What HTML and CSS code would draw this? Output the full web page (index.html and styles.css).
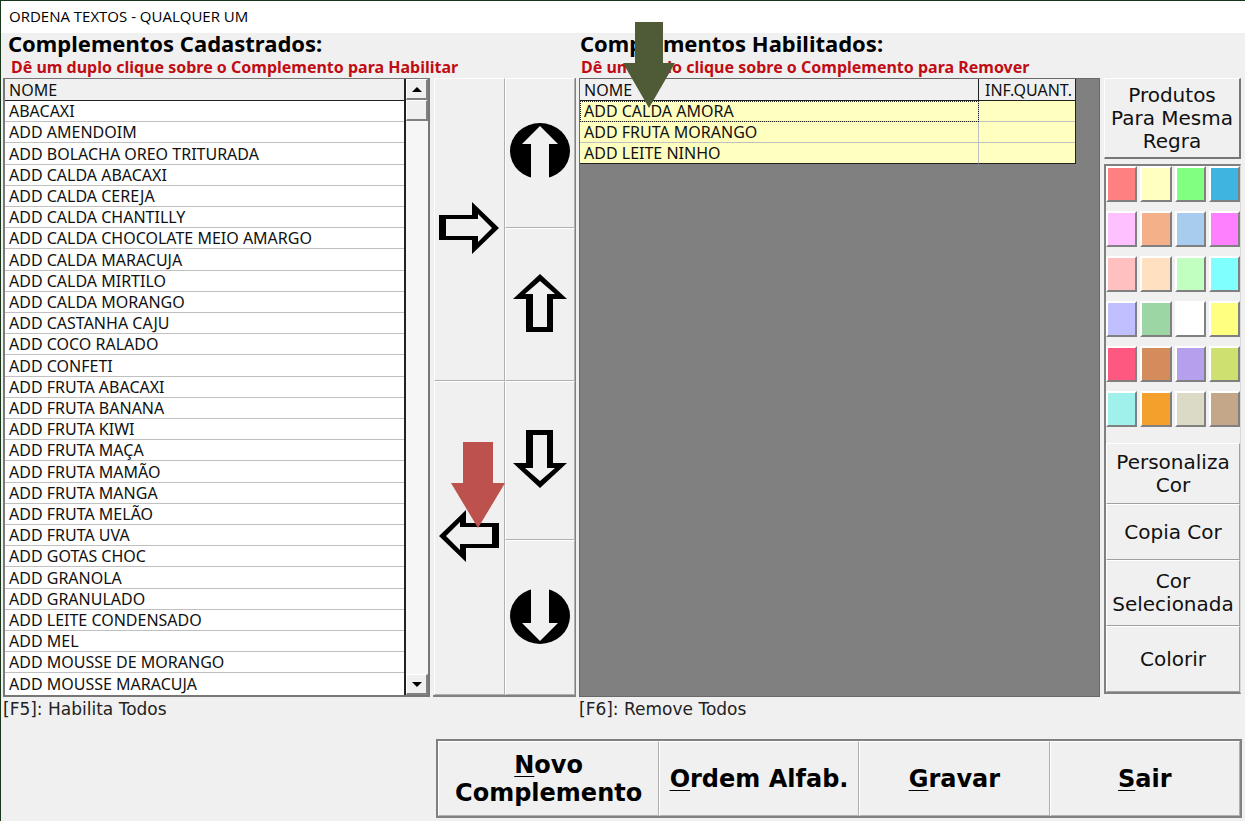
FILE: index.html
```html
<!DOCTYPE html>
<html lang="pt-BR">
<head>
<meta charset="utf-8">
<title>ORDENA TEXTOS - QUALQUER UM</title>
<link rel="stylesheet" href="styles.css">
</head>
<body>
<div class="window">
  <header class="titlebar">ORDENA TEXTOS - QUALQUER UM</header>
  <main class="workspace">
    <section class="column">
      <div class="heading">
        <h2>Complementos Cadastrados:</h2>
        <p>Dê um duplo clique sobre o Complemento para Habilitar</p>
      </div>
      <div class="list">
        <table class="grid grid-full">
          <thead><tr><th>NOME</th></tr></thead>
          <tbody>
            <tr><td>ABACAXI</td></tr>
            <tr><td>ADD AMENDOIM</td></tr>
            <tr><td>ADD BOLACHA OREO TRITURADA</td></tr>
            <tr><td>ADD CALDA ABACAXI</td></tr>
            <tr><td>ADD CALDA CEREJA</td></tr>
            <tr><td>ADD CALDA CHANTILLY</td></tr>
            <tr><td>ADD CALDA CHOCOLATE MEIO AMARGO</td></tr>
            <tr><td>ADD CALDA MARACUJA</td></tr>
            <tr><td>ADD CALDA MIRTILO</td></tr>
            <tr><td>ADD CALDA MORANGO</td></tr>
            <tr><td>ADD CASTANHA CAJU</td></tr>
            <tr><td>ADD COCO RALADO</td></tr>
            <tr><td>ADD CONFETI</td></tr>
            <tr><td>ADD FRUTA ABACAXI</td></tr>
            <tr><td>ADD FRUTA BANANA</td></tr>
            <tr><td>ADD FRUTA KIWI</td></tr>
            <tr><td>ADD FRUTA MAÇA</td></tr>
            <tr><td>ADD FRUTA MAMÃO</td></tr>
            <tr><td>ADD FRUTA MANGA</td></tr>
            <tr><td>ADD FRUTA MELÃO</td></tr>
            <tr><td>ADD FRUTA UVA</td></tr>
            <tr><td>ADD GOTAS CHOC</td></tr>
            <tr><td>ADD GRANOLA</td></tr>
            <tr><td>ADD GRANULADO</td></tr>
            <tr><td>ADD LEITE CONDENSADO</td></tr>
            <tr><td>ADD MEL</td></tr>
            <tr><td>ADD MOUSSE DE MORANGO</td></tr>
            <tr><td>ADD MOUSSE MARACUJA</td></tr>
          </tbody>
        </table>
        <div class="scrollbar">
          <button class="scroll-part" aria-label="Rolar para cima"><svg width="10" height="5" viewBox="0 0 10 5"><path d="M5 0l5 5H0z"/></svg></button>
          <div class="scroll-part"></div>
          <button class="scroll-part scroll-end" aria-label="Rolar para baixo"><svg width="10" height="5" viewBox="0 0 10 5"><path d="M0 0h10L5 5z"/></svg></button>
        </div>
      </div>
      <p class="hint">[F5]: Habilita Todos</p>
    </section>

    <section class="movers">
      <div class="mover-col mover-side">
        <button aria-label="Habilitar"><svg width="60" height="52" viewBox="0 0 60 52"><path fill-rule="evenodd" d="M0 13H33V0L60 26L33 52V38H0ZM7 17V34H39V40L53 26L39 12V17Z"/></svg></button>
        <button aria-label="Remover"><svg width="60" height="52" viewBox="0 0 60 52"><path fill-rule="evenodd" d="M60 13H27V0L0 26L27 52V38H60ZM53 17V34H21V40L7 26L21 12V17Z"/></svg></button>
      </div>
      <div class="mover-col mover-order">
        <button aria-label="Mover para o início"><svg width="60" height="60" viewBox="0 0 60 60"><ellipse cx="30" cy="30" rx="30" ry="28"/><path class="cut" d="M30 5L48 23H39V60H21V23H12Z"/></svg></button>
        <button aria-label="Mover para cima"><svg width="54" height="58" viewBox="0 0 54 58"><path fill-rule="evenodd" d="M27 0L54 25H40V58H13V25H0ZM27 7L12 20H20V53H34V20H42Z"/></svg></button>
        <button aria-label="Mover para baixo"><svg width="54" height="58" viewBox="0 0 54 58"><path fill-rule="evenodd" d="M27 58L54 33H40V0H13V33H0ZM27 51L12 38H20V5H34V38H42Z"/></svg></button>
        <button aria-label="Mover para o fim"><svg width="60" height="60" viewBox="0 0 60 60"><ellipse cx="30" cy="31" rx="30" ry="28"/><path class="cut" d="M30 56L48 38H39V0H21V38H12Z"/></svg></button>
      </div>
      <svg class="marker marker-red" width="54" height="86" viewBox="0 0 54 86"><path d="M12 0H42V41H54L27 86L0 41H12Z"/></svg>
    </section>

    <section class="column column-enabled">
      <div class="heading">
        <h2>Complementos Habilitados:</h2>
        <p>Dê um duplo clique sobre o Complemento para Remover</p>
      </div>
      <div class="list list-gray">
        <table class="grid grid-enabled">
          <thead><tr><th>NOME</th><th class="quant">INF.QUANT.</th></tr></thead>
          <tbody>
            <tr><td class="focused">ADD CALDA AMORA</td><td></td></tr>
            <tr><td>ADD FRUTA MORANGO</td><td></td></tr>
            <tr><td>ADD LEITE NINHO</td><td></td></tr>
          </tbody>
        </table>
      </div>
      <p class="hint">[F6]: Remove Todos</p>
      <svg class="marker marker-green" width="54" height="86" viewBox="0 0 54 86"><path d="M13 0H41V41H53L27 86L1 41H13Z"/></svg>
    </section>

    <aside class="tools">
      <button class="rule-button">Produtos Para Mesma Regra</button>
      <div class="tool-panel">
        <div class="swatches">
          <button class="swatch c1" aria-label="Cor 1"></button><button class="swatch c2" aria-label="Cor 2"></button><button class="swatch c3" aria-label="Cor 3"></button><button class="swatch c4" aria-label="Cor 4"></button>
          <button class="swatch c5" aria-label="Cor 5"></button><button class="swatch c6" aria-label="Cor 6"></button><button class="swatch c7" aria-label="Cor 7"></button><button class="swatch c8" aria-label="Cor 8"></button>
          <button class="swatch c9" aria-label="Cor 9"></button><button class="swatch c10" aria-label="Cor 10"></button><button class="swatch c11" aria-label="Cor 11"></button><button class="swatch c12" aria-label="Cor 12"></button>
          <button class="swatch c13" aria-label="Cor 13"></button><button class="swatch c14" aria-label="Cor 14"></button><button class="swatch c15" aria-label="Cor 15"></button><button class="swatch c16" aria-label="Cor 16"></button>
          <button class="swatch c17" aria-label="Cor 17"></button><button class="swatch c18" aria-label="Cor 18"></button><button class="swatch c19" aria-label="Cor 19"></button><button class="swatch c20" aria-label="Cor 20"></button>
          <button class="swatch c21" aria-label="Cor 21"></button><button class="swatch c22" aria-label="Cor 22"></button><button class="swatch c23" aria-label="Cor 23"></button><button class="swatch c24" aria-label="Cor 24"></button>
        </div>
        <div class="color-actions">
          <button>Personaliza Cor</button>
          <button>Copia Cor</button>
          <button>Cor Selecionada</button>
          <button>Colorir</button>
        </div>
      </div>
    </aside>
  </main>
  <footer class="actions">
    <button><span><u>N</u>ovo<br>Complemento</span></button>
    <button><span><u>O</u>rdem Alfab.</span></button>
    <button><span><u>G</u>ravar</span></button>
    <button><span><u>S</u>air</span></button>
  </footer>
</div>
</body>
</html>
```
FILE: styles.css
```css
* { box-sizing: border-box; }
body { margin: 0; background: #f0f0f0; color: #111; }
h2, p { margin: 0; }
button {
  margin: 0;
  padding: 0;
  border: 0;
  border-radius: 0;
  background: #f0f0f0;
  color: #111;
  font-family: "DejaVu Sans", Verdana, sans-serif;
}
.window {
  display: flex;
  flex-direction: column;
  min-height: 100vh;
  border-top: 1px solid #17361a;
  border-left: 1px solid #17361a;
}
.titlebar {
  height: 32px;
  padding-left: 8px;
  background: #fff;
  color: #000;
  font: 15px/30px "Open Sans", "Noto Sans", sans-serif;
}
.workspace {
  flex: 1;
  display: grid;
  grid-template-columns: minmax(0, 427fr) 143px minmax(0, 521fr) 138px;
  gap: 3px;
  padding: 0 4px 0 2px;
}
.column { position: relative; display: flex; flex-direction: column; }
.heading { height: 45px; white-space: nowrap; font-family: "Noto Sans", Tahoma, sans-serif; }
.heading h2 { padding-left: 5px; font-size: 22px; line-height: 20px; color: #000; }
.heading p { padding: 3px 0 0 8px; font-size: 16px; line-height: 22px; font-weight: bold; color: #c00d14; }
.column-enabled .heading h2 { padding-left: 1px; }
.column-enabled .heading p { padding-left: 2px; }
.hint { height: 24px; font: 17px/24px "DejaVu Sans", Verdana, sans-serif; color: #222; }

.list { flex: 1; display: flex; border: 2px solid #777; border-top-width: 1px; background: #fff; }
.list-gray { border: 1px solid #696969; background: #808080; padding-right: 23px; align-items: flex-start; }
.grid { border-collapse: separate; border-spacing: 0; table-layout: fixed; width: 100%; font: 16px/20px "Noto Sans", Tahoma, sans-serif; }
.grid-full { flex: 1; height: 100%; border-right: 2px solid #222; }
.grid th { padding: 1px 4px 0; text-align: left; font-weight: normal; background: #f0f0f0; border-bottom: 1px solid #222; }
.grid td { height: 21px; padding: 0 4px; border-bottom: 1px solid #c0c0c0; }
.grid tr:last-child td { border-bottom-color: #222; }
.grid-full tr:last-child td { border-bottom: 0; }
.grid-enabled { border-right: 1px solid #222; }
.grid-enabled td { background: #ffffc0; }
.grid-enabled th:first-child { border-right: 1px solid #222; }
.grid-enabled td:first-child { border-right: 1px solid #c0c0c0; }
.grid-enabled .quant { width: 96px; padding-left: 6px; }
.focused { outline: 1px dotted #222; outline-offset: -1px; }

.scrollbar { width: 22px; display: flex; flex-direction: column; background: #f6f6f6; }
.scroll-part { height: 21px; display: flex; align-items: center; justify-content: center; background: #f0f0f0; border: 1px solid #fff; border-right: 2px solid #808080; border-bottom: 2px solid #808080; }
.scroll-end { margin-top: auto; }

.movers { position: relative; display: grid; grid-template-columns: 1fr 1fr; margin: 45px 0 24px; padding-left: 1px; border-right: 1px solid #808080; border-bottom: 2px solid #808080; }
.mover-col { display: grid; }
.mover-side { grid-template-rows: 303fr 313fr; }
.mover-order { grid-template-rows: 150fr 153fr 158fr 155fr; }
.mover-col button { display: flex; align-items: center; justify-content: center; padding-bottom: 4px; border: 1px solid #fff; border-right-color: #b0b0b0; border-bottom-color: #b0b0b0; }
.cut { fill: #f0f0f0; }
.marker { position: absolute; pointer-events: none; }
.marker-red { left: 18px; top: 364px; fill: #bc514e; }
.marker-green { left: 43px; top: -11px; fill: #4f5a36; }

.tools { display: flex; flex-direction: column; gap: 5px; margin: 45px 0 27px; padding-left: 1px; }
.tools button { font-size: 20px; line-height: 23px; }
.rule-button { height: 81px; border: 1px solid #fff; border-right: 2px solid #777; border-bottom: 2px solid #777; }
.tool-panel { flex: 1; display: flex; flex-direction: column; gap: 16px; border: 2px solid #808080; border-right: 1px solid #d8d8d8; }
.swatches { display: grid; grid-template-columns: repeat(4, 1fr); gap: 9px 3px; }
.swatches .swatch { height: 36px; border: 2px solid #fff; border-right-color: #808080; border-bottom-color: #808080; }
.color-actions { flex: 1; display: grid; grid-template-rows: 61fr 56fr 67fr 66fr; }
.color-actions button { padding-top: 1px; border: 1px solid #fff; border-right-color: #a0a0a0; border-bottom-color: #a0a0a0; }

.c1 { background: #ff8080; } .c2 { background: #ffffc0; } .c3 { background: #80ff80; } .c4 { background: #40b4e0; }
.c5 { background: #ffc0ff; } .c6 { background: #f4b088; } .c7 { background: #a8ccee; } .c8 { background: #ff80ff; }
.c9 { background: #ffc0c0; } .c10 { background: #ffe0c0; } .c11 { background: #c0ffc0; } .c12 { background: #80ffff; }
.c13 { background: #c0c0ff; } .c14 { background: #9cd6a4; } .c15 { background: #ffffff; } .c16 { background: #ffff80; }
.c17 { background: #ff5880; } .c18 { background: #d48c5c; } .c19 { background: #b4a0ec; } .c20 { background: #cee070; }
.c21 { background: #a0f0ec; } .c22 { background: #f4a02c; } .c23 { background: #dadac6; } .c24 { background: #c4a688; }

.actions { display: grid; grid-template-columns: 220fr 200fr 190fr 190fr; min-height: 79px; margin: 18px 3px 3px 35%; border: 2px solid #808080; }
.actions button { border: 1px solid #fff; border-right-color: #b0b0b0; border-bottom-color: #b0b0b0; color: #000; font-size: 24px; line-height: 28px; font-weight: bold; }
.actions u { text-decoration-thickness: 1px; text-underline-offset: 3px; }
```
